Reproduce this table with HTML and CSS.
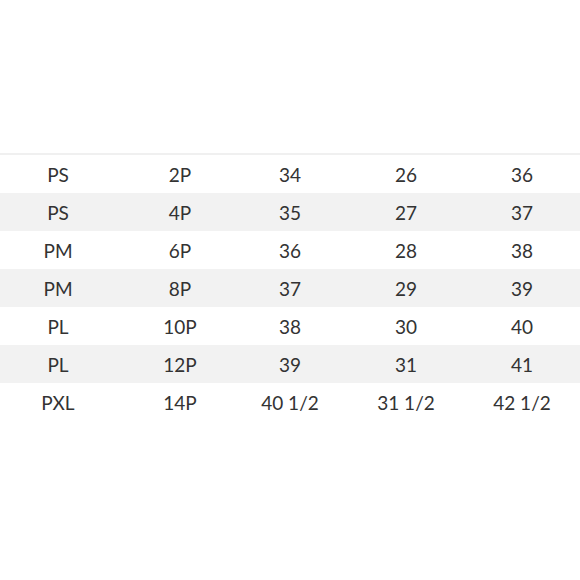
FILE: index.html
```html
<!DOCTYPE html>
<html>
<head>
<meta charset="utf-8">
<link rel="stylesheet" href="styles.css">
</head>
<body>
<div class="page">
  <div class="spacer"></div>
  <div class="table">
    <div class="row"><span>PS</span><span>2P</span><span>34</span><span>26</span><span>36</span></div>
    <div class="row alt"><span>PS</span><span>4P</span><span>35</span><span>27</span><span>37</span></div>
    <div class="row"><span>PM</span><span>6P</span><span>36</span><span>28</span><span>38</span></div>
    <div class="row alt"><span>PM</span><span>8P</span><span>37</span><span>29</span><span>39</span></div>
    <div class="row"><span>PL</span><span>10P</span><span>38</span><span>30</span><span>40</span></div>
    <div class="row alt"><span>PL</span><span>12P</span><span>39</span><span>31</span><span>41</span></div>
    <div class="row"><span>PXL</span><span>14P</span><span>40 1/2</span><span>31 1/2</span><span>42 1/2</span></div>
  </div>
</div>
</body>
</html>
```
FILE: styles.css
```css
html, body {
  margin: 0;
  padding: 0;
  background: #ffffff;
}
.page {
  width: 580px;
  height: 580px;
  display: flex;
  flex-direction: column;
}
.spacer {
  height: 153px;
  flex: none;
}
.table {
  border-top: 2px solid #f0f0f0;
}
.row {
  display: grid;
  grid-template-columns: repeat(5, 1fr);
  height: 38px;
  align-items: center;
  font-family: "Lato", "Liberation Sans", sans-serif;
  font-size: 19px;
  color: #333333;
}
.row span {
  text-align: center;
}
.row span:nth-child(2) {
  padding-left: 12px;
}
.row.alt {
  background: #f2f2f2;
}
```
